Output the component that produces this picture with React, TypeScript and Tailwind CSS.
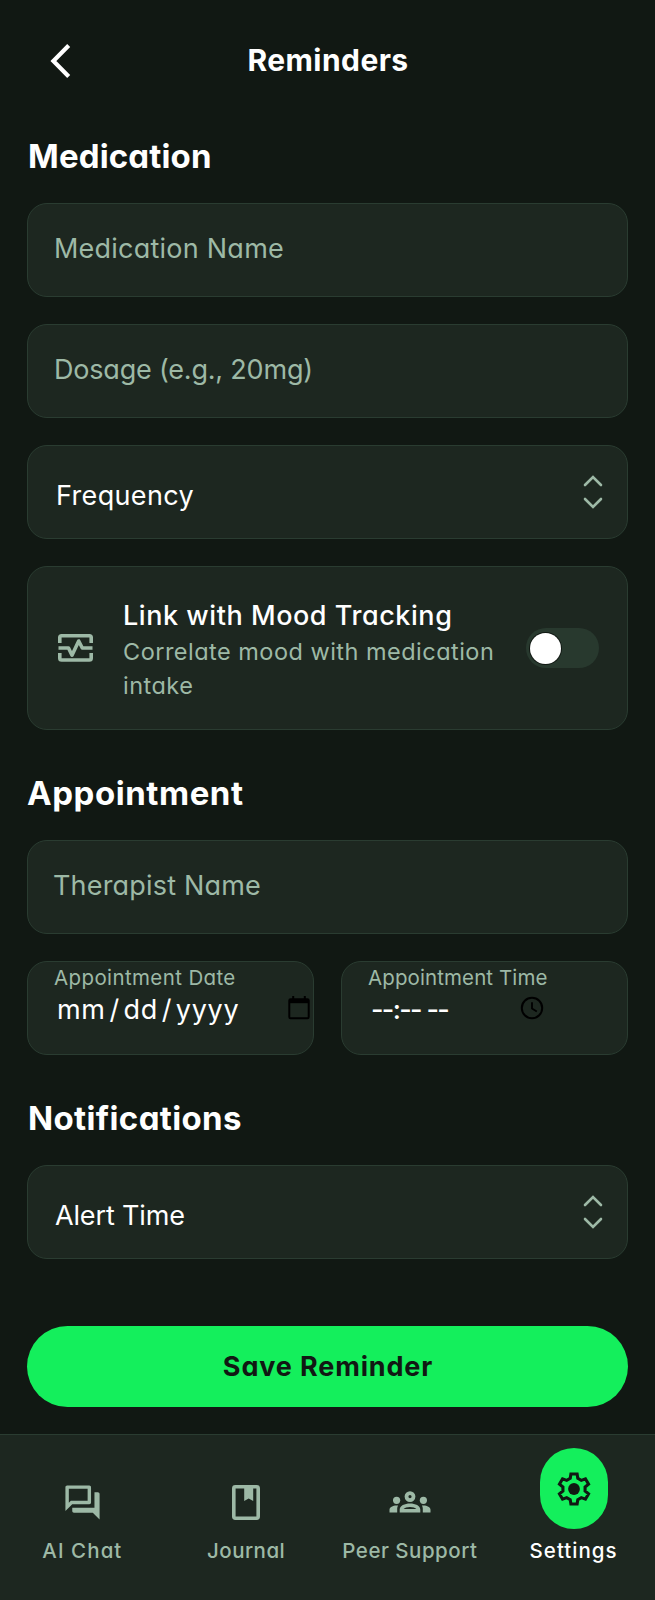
import type { ReactNode } from 'react';

const card = 'rounded-[20px] border border-[#2a3c31] bg-[#1d2720]';

const gearPoints = Array.from({ length: 6 }, (_, k) => {
  const a = (k * Math.PI) / 3;
  return [
    [-3.8, -10.6],
    [-3.1, -15],
    [3.1, -15],
    [3.8, -10.6],
  ]
    .map(([x, y]) => `${(x * Math.cos(a) - y * Math.sin(a)).toFixed(2)},${(x * Math.sin(a) + y * Math.cos(a)).toFixed(2)}`)
    .join(' ');
}).join(' ');

function BackIcon() {
  return (
    <svg className="h-9 w-[22px]" viewBox="0 0 22 36" fill="none" stroke="currentColor" strokeWidth="4.2">
      <path d="M18.700 2.500 3.400 18l15.300 15.500" />
    </svg>
  );
}

function SortIcon() {
  return (
    <svg className="h-9 w-5" viewBox="0 0 20 36" fill="none" stroke="currentColor" strokeWidth="2.6" strokeLinecap="round">
      <path d="M2 11 10 3l8 8M2 25l8 8 8-8" />
    </svg>
  );
}

function PulseIcon() {
  return (
    <svg className="h-7 w-[35px]" viewBox="0 0 35 28" fill="none" stroke="currentColor" strokeWidth="3.6">
      <path d="M1.8 9V3.600q0-1.800 1.800-1.800h27.800q1.800 0 1.800 1.800V9M1.800 19v5.200q0 1.800 1.800 1.800h27.800q1.800 0 1.800-1.800V19" />
      <path d="M.5 14h10l3.500 7.200L20.700 7l3.600 7h10.200" strokeLinejoin="round" />
    </svg>
  );
}

function CalendarIcon() {
  return (
    <svg className="h-6 w-[22px]" viewBox="0 0 22 24" fill="none" stroke="#000" strokeWidth="2">
      <rect x="1.3" y="3.3" width="19.4" height="19" rx="1.2" />
      <path d="M1 5.200h20" strokeWidth="4" />
      <path d="M5.200 0v4M16.800 0v4" />
    </svg>
  );
}

function ClockIcon() {
  return (
    <svg className="size-6" viewBox="0 0 24 24" fill="none" stroke="#000" strokeWidth="2">
      <circle cx="12" cy="12" r="10.2" />
      <path d="M12 6.200v6.300l4.800 2.900" strokeWidth="1.8" />
    </svg>
  );
}

function ChatIcon() {
  return (
    <svg className="size-[41px]" viewBox="0 0 24 24" fill="currentColor">
      <path d="M15 4v7H5.170L4 12.170V4h11m1-2H3c-.55 0-1 .45-1 1v14l4-4h10c.55 0 1-.45 1-1V3c0-.55-.45-1-1-1zm5 4h-2v9H6v2c0 .55.45 1 1 1h11l4 4V7c0-.55-.45-1-1-1z" />
    </svg>
  );
}

function JournalIcon() {
  return (
    <svg className="h-[35px] w-7" viewBox="0 0 28 35">
      <rect x="1.8" y="1.8" width="24.4" height="31.4" rx="1.6" fill="none" stroke="currentColor" strokeWidth="3.6" />
      <path d="M12.200 3h9v13l-4.500-2.600-4.500 2.600z" fill="currentColor" />
    </svg>
  );
}

function GroupsIcon() {
  return (
    <svg className="h-[22px] w-[42px]" viewBox="0 0 42 22" fill="currentColor">
      <circle cx="7.6" cy="9.3" r="3.6" />
      <circle cx="34.4" cy="9.3" r="3.6" />
      <path d="M.5 21.400v-2.700c0-2.700 3.400-4.300 7-4.300.5 0 1.200 0 1.700.1-.8 1.200-1 2.200-1 3.600v3.300zM41.500 21.400v-2.700c0-2.700-3.400-4.300-7-4.300-.5 0-1.200 0-1.700.1.8 1.200 1 2.200 1 3.600v3.300z" />
      <circle cx="21" cy="5.6" r="3.5" fill="none" stroke="currentColor" strokeWidth="3.8" />
      <path fillRule="evenodd" d="M10.700 21.400v-2.900c0-3.800 5-6 10.300-6s10.300 2.200 10.300 6v2.900zM14.600 18h12.800c-1-1.200-3.600-2-6.400-2s-5.400.8-6.400 2z" />
    </svg>
  );
}

function GearIcon() {
  return (
    <svg className="size-9" viewBox="-18 -18 36 36">
      <polygon points={gearPoints} fill="none" stroke="currentColor" strokeWidth="3.1" />
      <circle r="5.9" fill="currentColor" />
    </svg>
  );
}

function Heading({ children, className }: { children: ReactNode; className: string }) {
  return <h2 className={`mb-[27px] h-10 pl-px text-[33px] leading-10 font-bold text-white ${className}`}>{children}</h2>;
}

function Field({ children, className }: { children: ReactNode; className: string }) {
  return (
    <div className={`h-[94px] pt-[25px] pl-[26px] text-[27px] leading-10 whitespace-nowrap text-[#9db9a6] ${card} ${className}`}>{children}</div>
  );
}

function SelectField({ children, className }: { children: ReactNode; className: string }) {
  return (
    <div className={`flex h-[94px] items-center justify-between pr-[24px] pl-[28px] text-[27px] leading-10 text-white ${card}`}>
      <span className={`pt-[7px] ${className}`}>{children}</span>
      <span className="text-[#9db9a6]">
        <SortIcon />
      </span>
    </div>
  );
}

function DateField({ label, labelClass, value, icon }: { label: string; labelClass: string; value: ReactNode; icon: ReactNode }) {
  return (
    <div className={`h-[94px] pt-[2.5px] pl-[26px] whitespace-nowrap ${card}`}>
      <div className={`text-[20.5px] leading-[26px] text-[#9db9a6] ${labelClass}`}>{label}</div>
      <div className="flex text-[27px] leading-[38px] text-white">
        {value}
        <span className="pt-[5px]">{icon}</span>
      </div>
    </div>
  );
}

function NavItem({ icon, children, className }: { icon: ReactNode; children: ReactNode; className: string }) {
  return (
    <div className="flex flex-col items-center pl-px">
      <div className="mt-[13px] flex h-[81px] items-center justify-center">{icon}</div>
      <span className={`mt-[8px] text-[20.5px] leading-7 font-medium whitespace-nowrap ${className}`}>{children}</span>
    </div>
  );
}

export default function App() {
  return (
    <div className="flex h-[1600px] w-full flex-col bg-[#111813] font-['Inter',sans-serif] [font-feature-settings:'cv11']">
      <header className="grid h-[120px] grid-cols-[80px_1fr_80px] items-center text-white">
        <span className="pl-[50px] pt-px">
          <BackIcon />
        </span>
        <h1 className="pl-px text-center text-[30px] leading-10 font-bold tracking-[0.45px]">Reminders</h1>
      </header>

      <main className="flex flex-1 flex-col px-[27px] pt-4">
        <Heading className="tracking-[0.15px]">Medication</Heading>
        <div className="flex flex-col gap-[27px]">
          <Field className="tracking-[0.23px]">Medication Name</Field>
          <Field className="tracking-[-0.2px]">Dosage (e.g., 20mg)</Field>
          <SelectField className="tracking-[0.35px]">Frequency</SelectField>
          <div className={`flex h-[164px] ${card}`}>
            <span className="flex w-[95px] items-center pl-[30px] text-[#9db9a6]">
              <PulseIcon />
            </span>
            <div className="flex-1 pt-[30px] whitespace-nowrap">
              <div className="text-[27px] leading-[38px] font-medium tracking-[0.55px] text-white">Link with Mood Tracking</div>
              <p className="text-[23.5px] leading-[34px] tracking-[0.48px] text-[#9db9a6]">
                Correlate mood with medication
                <br />
                intake
              </p>
            </div>
            <div className="mr-[28px] flex h-10 w-[73px] items-center self-center rounded-full bg-[#28392e] pl-1">
              <span className="size-[31px] rounded-full bg-white ring-1 ring-[#111813]" />
            </div>
          </div>
        </div>

        <Heading className="mt-[43px] -indent-px tracking-[0.56px]">Appointment</Heading>
        <Field className="-indent-px tracking-[0.18px]">Therapist Name</Field>
        <div className="mt-[27px] grid grid-cols-2 gap-[27px]">
          <DateField
            label="Appointment Date"
            labelClass="tracking-[0.38px]"
            value={
              <span className="w-[234px] pl-[3px] tracking-[0.7px]">
                mm<span className="px-[3.7px]">/</span>dd<span className="px-[3.7px]">/</span>yyyy
              </span>
            }
            icon={<CalendarIcon />}
          />
          <DateField
            label="Appointment Time"
            labelClass="tracking-[0.1px]"
            value={<span className="w-[152px] pl-[3px] font-medium tracking-[-1.64px]">--:-- --</span>}
            icon={<ClockIcon />}
          />
        </div>

        <Heading className="mt-[43px] tracking-[0.35px]">Notifications</Heading>
        <SelectField className="-indent-px tracking-[-0.15px]">Alert Time</SelectField>

        <button className="mt-[67px] h-[81px] rounded-full bg-[#14ef5c] pt-[2px] pl-px text-[27px] font-bold tracking-[0.85px] text-[#111813]">
          Save Reminder
        </button>
      </main>

      <nav className="grid h-[166px] grid-cols-4 border-t border-[#2a3c31] bg-[#1d2720] text-[#9db9a6]">
        <NavItem icon={<span className="pt-[27px]"><ChatIcon /></span>} className="tracking-[1.07px]">AI Chat</NavItem>
        <NavItem icon={<span className="pt-[27px]"><JournalIcon /></span>} className="tracking-[0.45px]">Journal</NavItem>
        <NavItem icon={<span className="pt-[27px]"><GroupsIcon /></span>} className="tracking-[0.5px]">Peer Support</NavItem>
        <NavItem
          icon={
            <span className="flex h-[81px] w-[68px] items-center justify-center rounded-full bg-[#14ef5c] text-[#111813]">
              <GearIcon />
            </span>
          }
          className="tracking-[1.02px] text-white"
        >
          Settings
        </NavItem>
      </nav>
    </div>
  );
}
